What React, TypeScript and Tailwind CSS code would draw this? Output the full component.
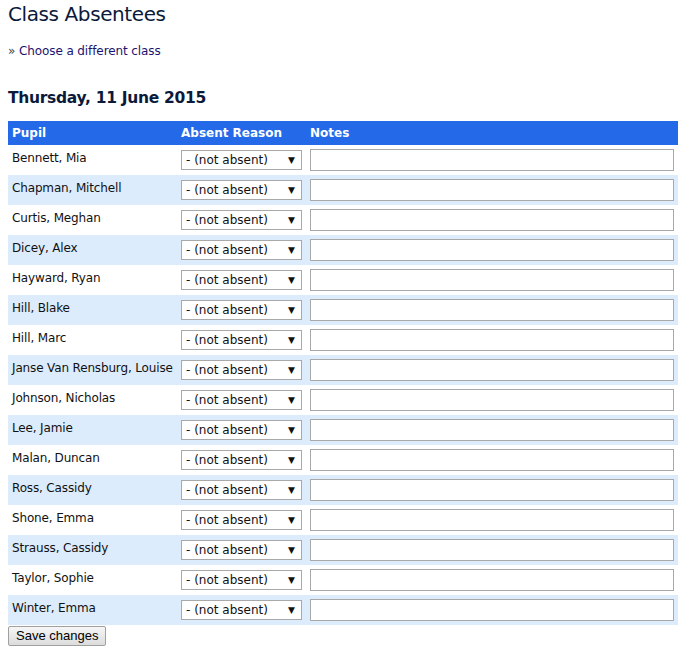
const pupils = [
  'Bennett, Mia',
  'Chapman, Mitchell',
  'Curtis, Meghan',
  'Dicey, Alex',
  'Hayward, Ryan',
  'Hill, Blake',
  'Hill, Marc',
  'Janse Van Rensburg, Louise',
  'Johnson, Nicholas',
  'Lee, Jamie',
  'Malan, Duncan',
  'Ross, Cassidy',
  'Shone, Emma',
  'Strauss, Cassidy',
  'Taylor, Sophie',
  'Winter, Emma',
];

export default function App() {
  return (
    <div className="min-h-screen bg-white px-2 pt-[2px] text-[12px] text-[#111] font-['DejaVu_Sans',sans-serif]">
      <h1 className="text-[20px] leading-[24px] tracking-[-0.4px] text-[#0b1a3a]">Class Absentees</h1>

      <p className="mt-[17px] leading-[16px] tracking-[-0.1px]">
        <span className="text-[#444]">»</span>{' '}
        <a href="#" className="text-[#1c1270]">Choose a different class</a>
      </p>

      <h2 className="mt-[29px] text-[15.5px] font-bold leading-[20px] tracking-[-0.3px] text-[#0b1a3a]">
        Thursday, 11 June 2015
      </h2>

      <table className="mt-[13px] w-[670px] table-fixed border-collapse">
        <thead>
          <tr className="h-[24px] bg-[#2469e8] text-left text-white">
            <th className="w-[169px] px-1 font-bold">Pupil</th>
            <th className="w-[129px] px-1 font-bold">Absent Reason</th>
            <th className="px-1 font-bold">Notes</th>
          </tr>
        </thead>
        <tbody>
          {pupils.map((name, i) => (
            <tr key={name} className={i % 2 === 1 ? 'h-[30px] bg-[#dcecfd]' : 'h-[30px] bg-white'}>
              <td className="px-1 pt-[4px] align-top whitespace-nowrap tracking-[-0.15px]">{name}</td>
              <td className="px-1 align-middle">
                <div className="relative flex h-[20px] w-[121px] items-center border border-[#a9a9a9] bg-white pl-1 text-[12px]">
                  <span>- (not absent)</span>
                  <span className="absolute right-[6px] top-[3px] text-[9px]">▼</span>
                </div>
              </td>
              <td className="px-1 align-middle">
                <input type="text" className="block h-[22px] w-[364px] border border-[#a9a9a9] bg-white" />
              </td>
            </tr>
          ))}
        </tbody>
      </table>

      <button className="mt-[1px] h-[20px] border border-[#a0a0a0] rounded-[2px] bg-gradient-to-b from-[#f6f6f6] to-[#dcdcdc] px-[7px] text-[13px] leading-[18px] font-['Liberation_Sans',Arial,sans-serif] text-black">
        Save changes
      </button>
    </div>
  );
}
